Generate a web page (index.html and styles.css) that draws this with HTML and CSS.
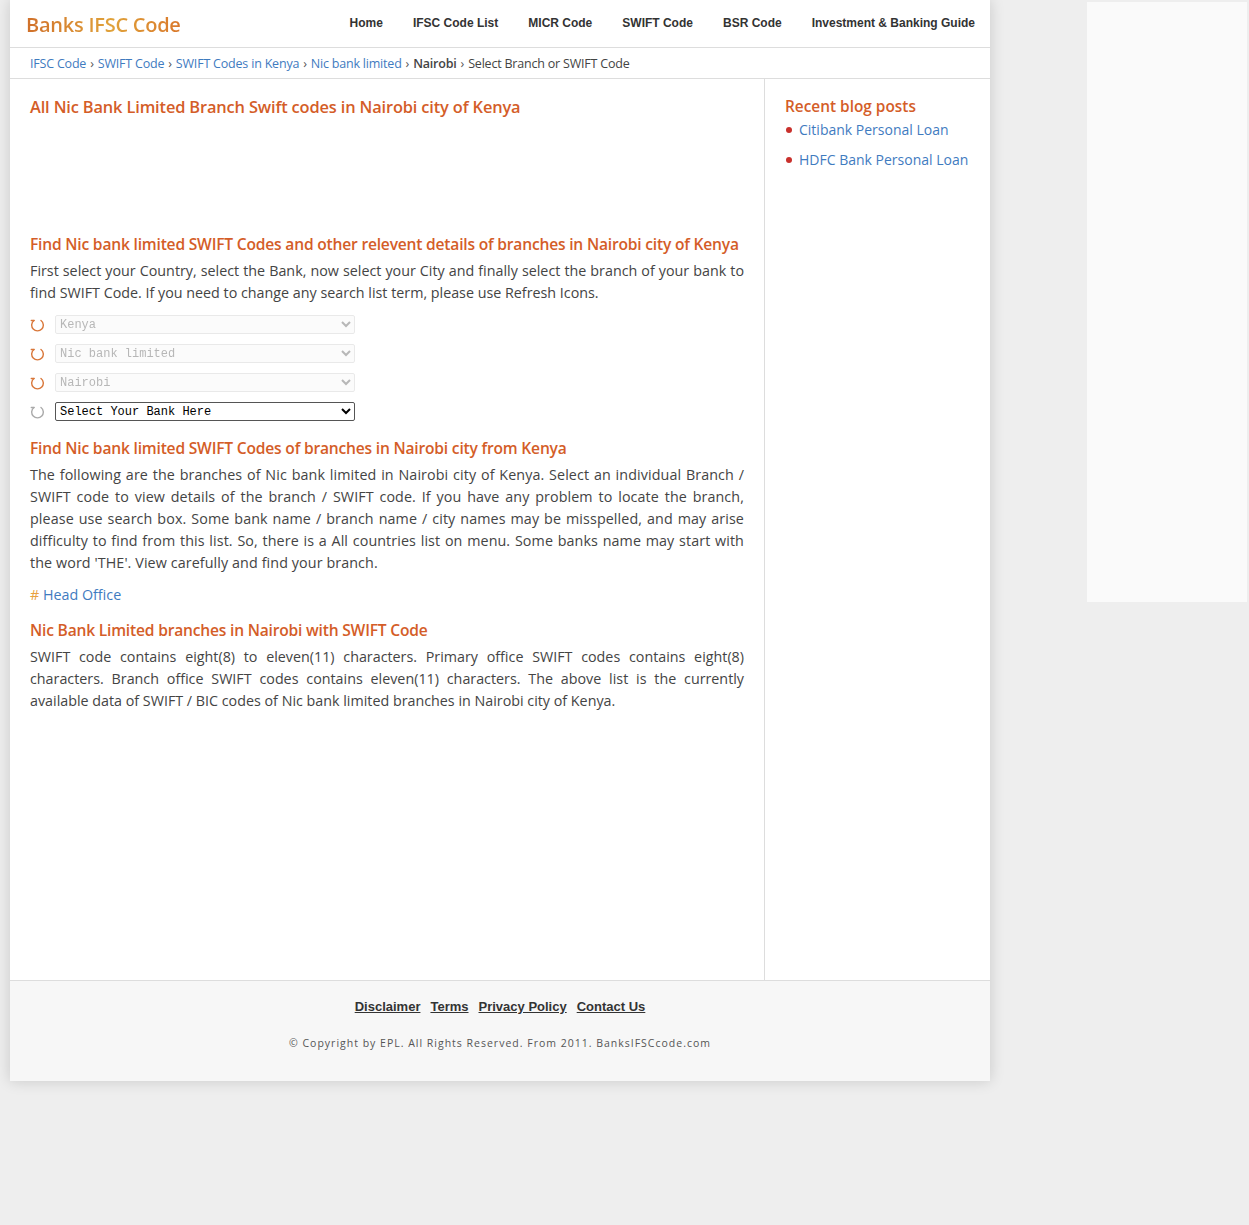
FILE: index.html
```html
<!DOCTYPE html>
<html lang="en">
<head>
<meta charset="utf-8">
<title>Nic Bank Limited SWIFT codes in Nairobi</title>
<link rel="stylesheet" href="styles.css">
</head>
<body>
<div class="page">
  <div class="wrap">
    <header class="header">
      <a class="logo" href="#">Banks IFSC Code</a>
      <nav class="nav">
        <a href="#">Home</a>
        <a href="#">IFSC Code List</a>
        <a href="#">MICR Code</a>
        <a href="#">SWIFT Code</a>
        <a href="#">BSR Code</a>
        <a href="#">Investment &amp; Banking Guide</a>
      </nav>
    </header>
    <div class="crumbs">
      <a href="#">IFSC Code</a><span class="sep">›</span><a href="#">SWIFT Code</a><span class="sep">›</span><a href="#">SWIFT Codes in Kenya</a><span class="sep">›</span><a href="#">Nic bank limited</a><span class="sep">›</span><b>Nairobi</b><span class="sep">›</span><span>Select Branch or SWIFT Code</span>
    </div>
    <div class="body-row">
      <main class="main">
        <h1 class="h1">All Nic Bank Limited Branch Swift codes in Nairobi city of Kenya</h1>
        <div class="ad"></div>
        <h2 class="h2">Find Nic bank limited SWIFT Codes and other relevent details of branches in Nairobi city of Kenya</h2>
        <p class="para">First select your Country, select the Bank, now select your City and finally select the branch of your bank to find SWIFT Code. If you need to change any search list term, please use Refresh Icons.</p>
        <div class="pickers">
          <div class="pick"><svg class="refresh" viewBox="0 0 14 16" width="14" height="16"><path d="M4 3.5 A5.8 5.8 0 1 0 11 3.5" /><path d="M1.3 3.5 H4" /></svg><select class="sel" disabled><option>Kenya</option></select></div>
          <div class="pick"><svg class="refresh" viewBox="0 0 14 16" width="14" height="16"><path d="M4 3.5 A5.8 5.8 0 1 0 11 3.5" /><path d="M1.3 3.5 H4" /></svg><select class="sel" disabled><option>Nic bank limited</option></select></div>
          <div class="pick"><svg class="refresh" viewBox="0 0 14 16" width="14" height="16"><path d="M4 3.5 A5.8 5.8 0 1 0 11 3.5" /><path d="M1.3 3.5 H4" /></svg><select class="sel" disabled><option>Nairobi</option></select></div>
          <div class="pick"><svg class="refresh off" viewBox="0 0 14 16" width="14" height="16"><path d="M4 3.5 A5.8 5.8 0 1 0 11 3.5" /><path d="M1.3 3.5 H4" /></svg><select class="sel active"><option>Select Your Bank Here</option></select></div>
        </div>
        <h2 class="h2">Find Nic bank limited SWIFT Codes of branches in Nairobi city from Kenya</h2>
        <p class="para para-loose">The following are the branches of Nic bank limited in Nairobi city of Kenya. Select an individual Branch / SWIFT code to view details of the branch / SWIFT code. If you have any problem to locate the branch, please use search box. Some bank name / branch name / city names may be misspelled, and may arise difficulty to find from this list. So, there is a All countries list on menu. Some banks name may start with the word 'THE'. View carefully and find your branch.</p>
        <p class="branch"><span class="hash">#</span> <a href="#">Head Office</a></p>
        <h2 class="h2">Nic Bank Limited branches in Nairobi with SWIFT Code</h2>
        <p class="para">SWIFT code contains eight(8) to eleven(11) characters. Primary office SWIFT codes contains eight(8) characters. Branch office SWIFT codes contains eleven(11) characters. The above list is the currently available data of SWIFT / BIC codes of Nic bank limited branches in Nairobi city of Kenya.</p>
      </main>
      <aside class="side">
        <h3 class="side-title">Recent blog posts</h3>
        <ul class="posts">
          <li><a href="#">Citibank Personal Loan</a></li>
          <li><a href="#">HDFC Bank Personal Loan</a></li>
        </ul>
      </aside>
    </div>
    <footer class="footer">
      <div class="flinks">
        <a href="#">Disclaimer</a>
        <a href="#">Terms</a>
        <a href="#">Privacy Policy</a>
        <a href="#">Contact Us</a>
      </div>
      <p class="copy">© Copyright by EPL. All Rights Reserved. From 2011. BanksIFSCcode.com</p>
    </footer>
  </div>
  <div class="sky"></div>
</div>
</body>
</html>
```

FILE: styles.css
```css
* { box-sizing: border-box; }
html, body { margin: 0; padding: 0; }
body {
  background: #eeeeee;
  font-family: "Open Sans", "Noto Sans", sans-serif;
  color: #444;
  height: 1225px;
}
a { text-decoration: none; color: #3f7bbf; }

.page {
  display: flex;
  align-items: flex-start;
  padding-left: 10px;
}
.wrap {
  width: 980px;
  background: #fff;
  box-shadow: 0 0 14px rgba(0,0,0,0.16);
}
.sky {
  width: 160px;
  height: 600px;
  margin-top: 2px;
  margin-left: 97px;
  background: #fafafa;
}

.header {
  height: 48px;
  display: flex;
  align-items: center;
  justify-content: space-between;
  border-bottom: 1px solid #ddd;
  padding: 0 0 0 16px;
}
.logo {
  font-size: 20px;
  font-weight: 600;
  letter-spacing: -0.25px;
  background: linear-gradient(90deg, #d0702a, #e0a23a 55%, #d9782b);
  -webkit-background-clip: text;
  background-clip: text;
  color: transparent;
  margin-top: 2px;
}
.nav {
  display: flex;
  margin-top: -1px;
}
.nav a {
  font-family: "Liberation Sans", Arial, sans-serif;
  font-weight: bold;
  font-size: 12px;
  color: #333;
  padding: 0 15px;
}

.crumbs {
  height: 31px;
  display: flex;
  align-items: center;
  padding-left: 20px;
  border-bottom: 1px solid #ddd;
  font-size: 12.5px;
  color: #444;
  letter-spacing: -0.2px;
}
.crumbs b { font-weight: 600; }
.crumbs .sep { margin: 0 4px; color: #555; }

.body-row {
  display: flex;
  min-height: 901px;
}
.main {
  width: 755px;
  border-right: 1px solid #ddd;
  padding: 14px 20px 20px 20px;
}
.side {
  flex: 1;
  padding: 17px 10px 16px 20px;
}

.h1 {
  margin: 0;
  font-size: 16.4px;
  font-weight: 600;
  color: #d45d28;
  line-height: 28px;
  letter-spacing: -0.15px;
}
.ad { height: 110px; }
.h2 {
  margin: 0 0 3px;
  font-size: 15.6px;
  font-weight: 600;
  color: #d45d28;
  line-height: 26px;
  letter-spacing: -0.2px;
}
.para {
  margin: 0 0 8px;
  font-size: 14.3px;
  line-height: 22px;
  color: #444;
  text-align: justify;
}
.para-loose { letter-spacing: 0.1px; }
.pickers {
  display: flex;
  flex-direction: column;
  gap: 10px;
  margin: 11px 0 14px;
}
.pick {
  display: flex;
  align-items: center;
  height: 19px;
}
.refresh {
  width: 14px;
  height: 16px;
  margin: 0 11px 0 0;
  fill: none;
  stroke: #d9773a;
  stroke-width: 1.4;
  stroke-linecap: round;
}
.refresh.off { stroke: #aaa; }
.sel {
  width: 300px;
  height: 19px;
  font-family: "Liberation Mono", "DejaVu Sans Mono", monospace;
  font-size: 12px;
  padding: 0;
  border: 1px solid #e0e0e0;
  border-radius: 2px;
  background: #fafafa;
  color: #999;
}
.sel.active {
  border: 1px solid #555;
  background: #fff;
  color: #000;
}
.branch {
  margin: 10px 0 11px;
  font-size: 14.3px;
  line-height: 22px;
}
.hash { color: #e8a040; }

.side-title {
  margin: 0;
  font-size: 15.4px;
  font-weight: 600;
  color: #d45d28;
  line-height: 22px;
}
.posts {
  list-style: none;
  margin: 0;
  padding: 0;
}
.posts li {
  font-size: 14px;
  line-height: 24px;
  margin-bottom: 6px;
  display: flex;
  align-items: center;
  white-space: nowrap;
}
.posts li::before {
  content: "";
  width: 6px;
  height: 6px;
  border-radius: 50%;
  background: #c9302c;
  margin: 0 7px 0 1px;
}

.footer {
  height: 101px;
  background: #f7f7f7;
  border-top: 1px solid #ddd;
  text-align: center;
  padding-top: 18px;
}
.flinks {
  display: flex;
  justify-content: center;
  gap: 10px;
}
.flinks a {
  font-family: "Liberation Sans", Arial, sans-serif;
  font-weight: bold;
  font-size: 13px;
  color: #333;
  text-decoration: underline;
}
.copy {
  margin: 22px 0 0;
  font-size: 10.5px;
  letter-spacing: 1px;
  color: #555;
}
```
